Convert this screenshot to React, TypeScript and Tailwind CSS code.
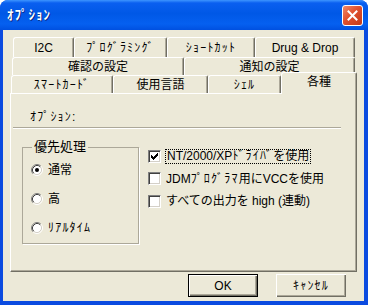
import React from "react";

const tabBase =
  "flex items-center justify-center bg-[#ece9d8] border-l border-t border-r border-l-white border-t-white border-r-[#716f64] rounded-tl-[3px] rounded-tr-[2px] shadow-[inset_-1px_0_0_#aca899]";

// half-width katakana runs are a bit wider in the original UI font
function Txt({ text }: { text: string }) {
  const parts = text.split(/([\uFF61-\uFF9F]+)/);
  return (
    <>
      {parts.map((p, i) =>
        /[\uFF61-\uFF9F]/.test(p) ? (
          <span key={i} className="tracking-[1.2px]">
            {p}
          </span>
        ) : (
          <React.Fragment key={i}>{p}</React.Fragment>
        )
      )}
    </>
  );
}

function Tab({ label, w }: { label: string; w: string }) {
  return (
    <div className={`${tabBase} ${w} h-full`}>
      <Txt text={label} />
    </div>
  );
}

function Radio({ checked }: { checked?: boolean }) {
  return (
    <svg width="12" height="12" viewBox="0 0 12 12" className="shrink-0">
      <circle cx="6" cy="6" r="4.5" fill="#fff" />
      <path d="M2.11 9.89A5.5 5.5 0 0 1 9.89 2.11" fill="none" stroke="#808080" />
      <path d="M9.89 2.11A5.5 5.5 0 0 1 2.11 9.89" fill="none" stroke="#fff" />
      <path d="M2.82 9.18A4.5 4.5 0 0 1 9.18 2.82" fill="none" stroke="#404040" />
      <path d="M9.18 2.82A4.5 4.5 0 0 1 2.82 9.18" fill="none" stroke="#d4d0c8" />
      {checked && <circle cx="6" cy="6" r="2" fill="#000" />}
    </svg>
  );
}

function Check({ checked }: { checked?: boolean }) {
  return (
    <div className="flex h-[13px] w-[13px] shrink-0 items-center justify-center border border-t-[#808080] border-l-[#808080] border-r-white border-b-white bg-white shadow-[inset_1px_1px_0_#404040,inset_-1px_-1px_0_#d4d0c8]">
      {checked && (
        <svg width="7" height="7" viewBox="0 0 7 7">
          <path
            d="M0 2h1v3H0z M1 3h1v3H1z M2 4h1v3H2z M3 3h1v3H3z M4 2h1v3H4z M5 1h1v3H5z M6 0h1v3H6z"
            fill="#000"
          />
        </svg>
      )}
    </div>
  );
}

function Button({ label, primary }: { label: string; primary?: boolean }) {
  return (
    <div
      className={`flex h-[23px] w-[70px] items-center justify-center bg-[#ece9d8] ${
        primary
          ? "border border-black shadow-[inset_1px_1px_0_#fff,inset_-1px_-1px_0_#716f64,inset_-2px_-2px_0_#aca899]"
          : "shadow-[inset_1px_1px_0_#fff,inset_-1px_-1px_0_#716f64,inset_-2px_-2px_0_#aca899]"
      }`}
    >
      <Txt text={label} />
    </div>
  );
}

export default function App() {
  return (
    <div className="h-[305px] w-[368px] bg-white font-['Liberation_Sans','Noto_Sans_CJK_JP',sans-serif] text-[12px] leading-[16px] text-black">
      <div className="flex h-full flex-col overflow-hidden rounded-t-[8px] bg-[#0b4be0]">
        {/* Title bar */}
        <div className="flex h-[30px] shrink-0 items-center justify-between bg-[linear-gradient(180deg,#3d95ff_0%,#0a5ff0_10%,#0058e6_45%,#0560f0_80%,#0050e0_100%)] pl-[7px] pr-[5px]">
          <span className="text-[13px] font-bold tracking-[1px] text-white [text-shadow:1px_1px_0_#0c2a8a]">ｵﾌﾟｼｮﾝ</span>
          <div className="flex h-[21px] w-[21px] items-center justify-center rounded-[3px] border border-white bg-[linear-gradient(135deg,#ef8a6a_0%,#e0502e_45%,#c33a18_100%)]">
            <svg width="11" height="11" viewBox="0 0 11 11">
              <path d="M1.5 1.5L9.5 9.5M9.5 1.5L1.5 9.5" stroke="#fff" strokeWidth="2" strokeLinecap="square" />
            </svg>
          </div>
        </div>

        {/* Body */}
        <div className="mb-[4px] ml-[3px] mr-[4px] flex flex-1 flex-col bg-[#ece9d8] px-[7px] pt-[7px]">
          {/* Tab rows */}
          <div className="ml-[3px] flex h-[20px]">
            <Tab label="I2C" w="w-[61px]" />
            <Tab label="ﾌﾟﾛｸﾞﾗﾐﾝｸﾞ" w="w-[93px]" />
            <Tab label="ｼｮｰﾄｶｯﾄ" w="w-[88px]" />
            <Tab label="Drug & Drop" w="w-[100px]" />
          </div>
          <div className="ml-[2px] flex h-[18px]">
            <Tab label="確認の設定" w="w-[172px]" />
            <Tab label="通知の設定" w="w-[171px]" />
          </div>
          <div className="ml-[1px] flex h-[18px] items-end">
            <Tab label="ｽﾏｰﾄｶｰﾄﾞ" w="w-[102px]" />
            <Tab label="使用言語" w="w-[95px]" />
            <Tab label="ｼｪﾙ" w="w-[73px]" />
            <div className={`${tabBase} relative z-10 -mb-[1px] h-[22px] w-[76px] shrink-0 pb-[3px]`}>各種</div>
          </div>

          {/* Panel */}
          <div className="flex h-[179px] flex-col border border-l-white border-t-white border-r-[#716f64] border-b-[#716f64] shadow-[inset_-1px_-1px_0_#aca899]">
            <div className="pl-[19px] pt-[15px]">
              <Txt text="ｵﾌﾟｼｮﾝ:" />
            </div>
            <div className="ml-[2px] mt-[2px] h-[2px] w-[328px] border-t border-b border-t-[#aca899] border-b-white" />

            <div className="mt-[16px] flex">
              {/* Group box */}
              <div className="relative ml-[11px] mt-[2px] flex h-[97px] w-[117px] flex-col border border-[#aca899] pl-[8px] pt-[7px] shadow-[1px_1px_0_#fff]">
                <span className="absolute -top-[9px] left-[9px] bg-[#ece9d8] px-[2px] text-[13px]">優先処理</span>
                <div className="flex h-[29px] items-center gap-[5px]">
                  <Radio checked />
                  <span>通常</span>
                </div>
                <div className="flex h-[29px] items-center gap-[5px]">
                  <Radio />
                  <span>高</span>
                </div>
                <div className="flex h-[29px] items-center gap-[5px]">
                  <Radio />
                  <span>
                    <Txt text="ﾘｱﾙﾀｲﾑ" />
                  </span>
                </div>
              </div>

              {/* Checkboxes */}
              <div className="ml-[9px] flex flex-col">
                <div className="flex h-[22.5px] items-center gap-[4px]">
                  <Check checked />
                  <span className="border border-dotted border-black px-[1px] leading-[13px]">
                    <Txt text="NT/2000/XPﾄﾞﾗｲﾊﾞを使用" />
                  </span>
                </div>
                <div className="flex h-[22.5px] items-center gap-[5px]">
                  <Check />
                  <span>
                    <Txt text="JDMﾌﾟﾛｸﾞﾗﾏ用にVCCを使用" />
                  </span>
                </div>
                <div className="flex h-[22.5px] items-center gap-[5px]">
                  <Check />
                  <span>すべての出力を high (連動)</span>
                </div>
              </div>
            </div>
          </div>

          {/* Buttons */}
          <div className="mr-[11px] mt-[2px] flex justify-end gap-[18px]">
            <Button label="OK" primary />
            <Button label="ｷｬﾝｾﾙ" />
          </div>
        </div>
      </div>
    </div>
  );
}
